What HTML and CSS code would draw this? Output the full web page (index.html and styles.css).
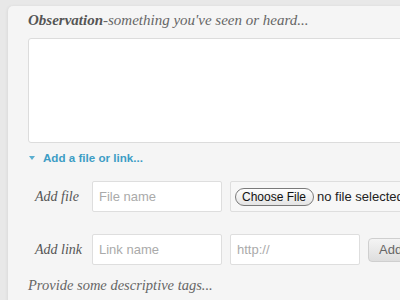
FILE: index.html
```html
<!DOCTYPE html>
<html lang="en">
<head>
  <meta charset="UTF-8">
  <title>Observation</title>
  <link rel="stylesheet" href="styles.css">
</head>
<body>
  <div class="panel">
    <h2 class="prompt"><b>Observation</b>-something you've seen or heard...</h2>
    <textarea class="note"></textarea>

    <a class="toggle" href="#"><span class="arrow"></span>Add a file or link...</a>

    <div class="row">
      <label class="row-label">Add file</label>
      <input class="field" type="text" placeholder="File name">
      <div class="file-box">
        <span class="choose-btn">Choose File</span>
        <span class="file-status">no file selected</span>
      </div>
    </div>

    <div class="row row-link">
      <label class="row-label">Add link</label>
      <input class="field" type="text" placeholder="Link name">
      <input class="field" type="text" placeholder="http://">
      <button class="add-btn">Add</button>
    </div>

    <p class="prompt tags">Provide some descriptive tags...</p>
  </div>
</body>
</html>
```

FILE: styles.css
```css
body {
  margin: 0;
  background-color: #e8e8e8;
  overflow: hidden;
  height: 300px;
}
.panel {
  margin: 6px 0 0 8px;
  width: 560px;
  height: 320px;
  padding: 4px 0 0 20px;
  background-color: #f5f5f5;
  border-radius: 5px 0 0 0;
  box-shadow: -1px 0 3px rgba(0, 0, 0, 0.06);
}
.prompt {
  margin: 0;
  font-family: "Liberation Serif", serif;
  font-style: italic;
  font-weight: normal;
  font-size: 15px;
  line-height: 20px;
  color: #666;
}
.prompt b {
  color: #555;
}
.note {
  display: block;
  box-sizing: border-box;
  margin-top: 8px;
  width: 420px;
  height: 105px;
  border: 1px solid #dcdcdc;
  border-radius: 3px;
  background-color: #fff;
  resize: none;
}
.toggle {
  display: inline-block;
  margin: 7px 0 0 1px;
  font-family: "Liberation Sans", Arial, sans-serif;
  font-weight: bold;
  font-size: 11.6px;
  line-height: 16px;
  color: #3d9dc5;
  text-decoration: none;
}
.arrow {
  display: inline-block;
  width: 0;
  height: 0;
  margin: 0 8px 2px 0;
  border-left: 3.5px solid transparent;
  border-right: 3.5px solid transparent;
  border-top: 4px solid #5aaed0;
  vertical-align: middle;
}
.row {
  display: flex;
  align-items: center;
  gap: 8px;
  margin-top: 15px;
}
.row-link {
  margin-top: 22px;
}
.row-label {
  box-sizing: border-box;
  width: 56px;
  padding-left: 7px;
  font-family: "Liberation Serif", serif;
  font-style: italic;
  font-size: 14px;
  color: #555;
  white-space: nowrap;
}
.field {
  box-sizing: border-box;
  width: 130px;
  height: 31px;
  margin: 0;
  padding: 0 6px;
  border: 1px solid #dedede;
  border-radius: 2px;
  background-color: #fff;
  font-family: "Liberation Sans", Arial, sans-serif;
  font-size: 13px;
  color: #333;
}
.field::placeholder {
  color: #aaa;
}
.file-box {
  box-sizing: border-box;
  display: flex;
  align-items: center;
  height: 31px;
  width: 200px;
  padding-left: 4px;
  border: 1px solid #dedede;
  border-radius: 2px;
  background-color: #f7f7f7;
  font-family: "Liberation Sans", Arial, sans-serif;
  font-size: 13px;
  color: #222;
  white-space: nowrap;
}
.choose-btn {
  box-sizing: border-box;
  height: 18px;
  padding: 0 7px 0 6px;
  line-height: 16px;
  border: 1px solid #7a7a7a;
  border-radius: 9px;
  background: linear-gradient(#ffffff, #e4e4e4);
  font-size: 12px;
  color: #111;
}
.file-status {
  margin-left: 3px;
}
.add-btn {
  height: 24px;
  padding: 0 10px;
  border: 1px solid #cfcfcf;
  border-radius: 4px;
  background: linear-gradient(#f4f4f4, #dedede);
  font-family: "Liberation Sans", Arial, sans-serif;
  font-size: 13px;
  color: #666;
}
.tags {
  margin-top: 10px;
  font-size: 14.5px;
}
```
